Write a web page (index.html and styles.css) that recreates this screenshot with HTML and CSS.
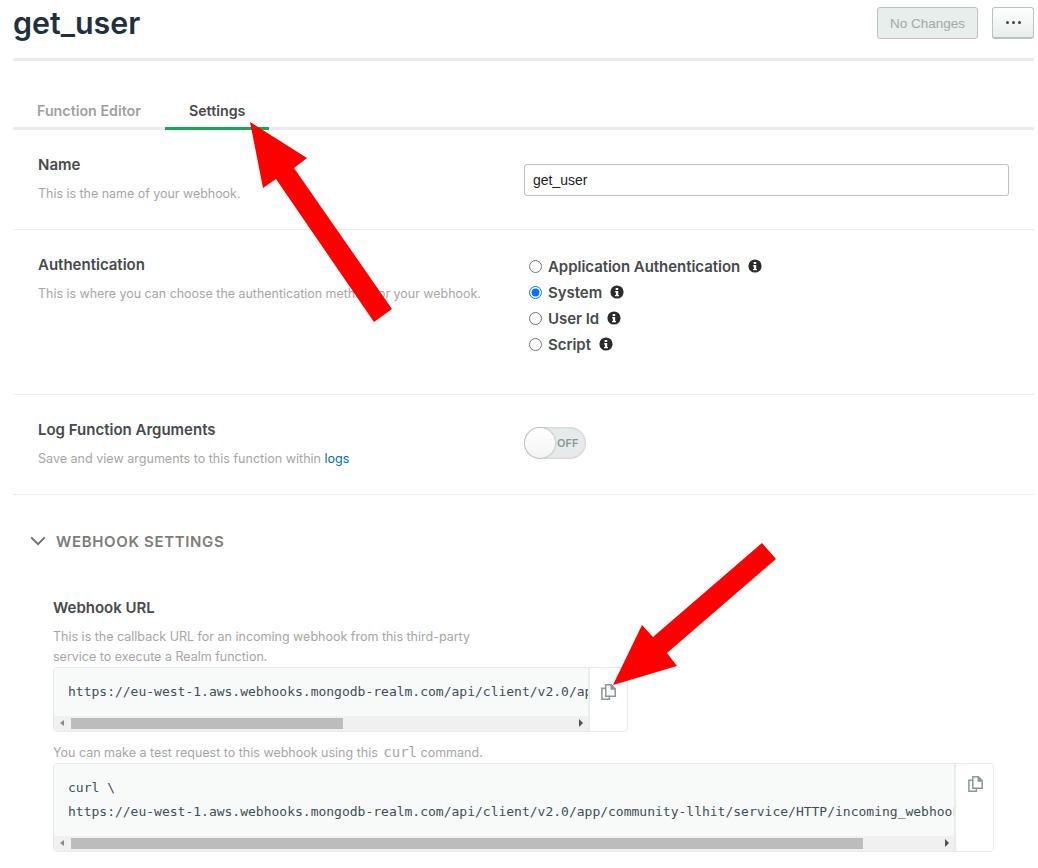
FILE: index.html
```html
<!DOCTYPE html>
<html lang="en">
<head>
<meta charset="utf-8">
<title>get_user</title>
<link rel="stylesheet" href="styles.css">
</head>
<body>
<div class="page">
  <header class="head">
    <h1 class="title">get_user</h1>
    <div class="actions">
      <button class="btn btn-disabled">No Changes</button>
      <button class="btn btn-more"><span class="dot"></span><span class="dot"></span><span class="dot"></span></button>
    </div>
  </header>
  <nav class="tabs">
    <a class="tab">Function Editor</a>
    <a class="tab tab-active">Settings</a>
  </nav>
  <section class="row row-name">
    <div class="row-left">
      <div class="label">Name</div>
      <div class="hint">This is the name of your webhook.</div>
    </div>
    <div class="row-right"><input class="text-input" type="text" value="get_user"></div>
  </section>
  <section class="row row-auth">
    <div class="row-left">
      <div class="label">Authentication</div>
      <div class="hint">This is where you can choose the authentication method for your webhook.</div>
    </div>
    <div class="row-right radios">
      <label class="radio"><input type="radio" name="auth"><span>Application Authentication</span><svg class="info" viewBox="0 0 14 14"><use href="#i-info"/></svg></label>
      <label class="radio"><input type="radio" name="auth" checked><span>System</span><svg class="info" viewBox="0 0 14 14"><use href="#i-info"/></svg></label>
      <label class="radio"><input type="radio" name="auth"><span>User Id</span><svg class="info" viewBox="0 0 14 14"><use href="#i-info"/></svg></label>
      <label class="radio"><input type="radio" name="auth"><span>Script</span><svg class="info" viewBox="0 0 14 14"><use href="#i-info"/></svg></label>
    </div>
  </section>
  <section class="row row-log">
    <div class="row-left">
      <div class="label">Log Function Arguments</div>
      <div class="hint">Save and view arguments to this function within <a class="link">logs</a></div>
    </div>
    <div class="row-right">
      <div class="toggle"><span class="knob"></span><span class="toggle-text">OFF</span></div>
    </div>
  </section>
  <section class="webhook">
    <div class="section-head">
      <svg class="chevron" viewBox="0 0 16 10"><path d="M1.2 1.400 8 8.200l6.800-6.800" fill="none" stroke="#6f7173" stroke-width="2"/></svg>
      <span>WEBHOOK SETTINGS</span>
    </div>
    <div class="field">
      <div class="label">Webhook URL</div>
      <p class="hint hint-url">This is the callback URL for an incoming webhook from this third-party<br>service to execute a Realm function.</p>
      <div class="code-box code-url">
        <div class="code-main">
          <pre class="code">https://eu-west-1.aws.webhooks.mongodb-realm.com/api/client/v2.0/app/community-llhit/service/HTTP/incoming_webhook/get_user</pre>
          <div class="scrollbar"><span class="arrow-l"></span><span class="thumb thumb-url"></span><span class="arrow-r"></span></div>
        </div>
        <div class="copy"><svg class="copy-icon" viewBox="0 0 15 16"><use href="#i-copy"/></svg></div>
      </div>
      <p class="hint hint-curl">You can make a test request to this webhook using this <code class="inline">curl</code> command.</p>
      <div class="code-box code-curl">
        <div class="code-main">
          <pre class="code">curl \
https://eu-west-1.aws.webhooks.mongodb-realm.com/api/client/v2.0/app/community-llhit/service/HTTP/incoming_webhook/get_user</pre>
          <div class="scrollbar"><span class="arrow-l"></span><span class="thumb thumb-curl"></span><span class="arrow-r"></span></div>
        </div>
        <div class="copy"><svg class="copy-icon" viewBox="0 0 15 16"><use href="#i-copy"/></svg></div>
      </div>
    </div>
  </section>
  <svg class="arrows" viewBox="0 0 1038 868">
    <polygon points="250,122 307,158 294,168 392,309 374,322 276,179 263,188" fill="#ff0000"/>
    <polygon points="613,685 677,666 667,653 776,559 762,543 653,637 642,625" fill="#ff0000"/>
  </svg>
</div>
<svg class="defs" width="0" height="0">
  <symbol id="i-info" viewBox="0 0 14 14">
    <path fill-rule="evenodd" fill="#2b2b2b" d="M7 .4a6.600 6.600 0 1 0 0 13.200A6.600 6.600 0 0 0 7 .4ZM5.700 2.900h2.500v2H5.700v-2Zm-.5 3.200h3v3.900h.8v1.300H5v-1.300h.9V7.400h-.7V6.100Z"/>
  </symbol>
  <symbol id="i-copy" viewBox="0 0 15 16">
    <path fill="none" stroke="#89979b" stroke-width="1.500" d="M4.800 12.300V.8h5.500l3.900 3.900v7.600H4.800Z"/>
    <path fill="#89979b" d="M9.500.8h1l4 4v1H9.500V.8Z"/>
    <path fill="none" stroke="#89979b" stroke-width="1.500" d="M4.800 4.300H.9v10.900h7.500v-2.900"/>
  </symbol>
</svg>
</body>
</html>
```
FILE: styles.css
```css
* { box-sizing: border-box; }
html, body { margin: 0; padding: 0; background: #fff; }
body { font-family: Inter, "Liberation Sans", sans-serif; color: #3f4244; overflow: hidden; }
.page { position: relative; width: 1038px; height: 868px; padding: 0 4px 0 13px; overflow: hidden; }
.defs { position: absolute; }

.head { display: flex; justify-content: space-between; height: 61px; border-bottom: 3px solid #ebebeb; }
.title { margin: 0; font-size: 30.400px; line-height: 46px; font-weight: 600; color: #21313c; }
.actions { display: flex; gap: 14px; padding-top: 7px; }
.btn { height: 32px; border-radius: 3px; font-family: "Liberation Sans", sans-serif; font-size: 13.500px; padding: 0; }
.btn-disabled { width: 101px; background: #e7eeec; border: 1px solid #b8c4c2; color: #9fa9a7; }
.btn-more { width: 42px; display: flex; align-items: center; justify-content: center; gap: 3px; background: linear-gradient(#fff, #e7eeec); border: 1px solid #b8c4c2; border-bottom-width: 2px; }
.dot { width: 3px; height: 3px; border-radius: 50%; background: #3f4244; }

.tabs { display: flex; height: 69px; padding-top: 33px; padding-left: 24px; border-bottom: 3px solid #ebebeb; gap: 48px; }
.tab { font-size: 14.250px; font-weight: 600; line-height: 33px; height: 36px; color: #a0a0a0; }
.tab-active { color: #464a4c; padding: 0 24px; margin-left: -24px; border-bottom: 3px solid #13aa52; }

.row { display: flex; border-bottom: 1px solid #ebebeb; padding-left: 25px; }
.row-left { width: 486px; }
.row-right { flex: 1; }
.row-name { height: 100px; padding-top: 25px; padding-right: 25px; }
.row-name .row-right { padding-top: 9px; }
.row-auth { height: 165px; padding-top: 23px; }
.row-auth .row-left { padding-top: 2px; }
.row-log { height: 100px; padding-top: 25px; }
.row-log .row-right { padding-top: 7px; }
.label { font-size: 15px; font-weight: 600; line-height: 20px; color: #464a4c; }
.hint { font-size: 12.500px; line-height: 21px; color: #a6a6a6; margin-top: 8px; }
.row .hint { font-size: 12.450px; }
.row-log .hint { font-size: 12.550px; }
.link { color: #006cbc; }

.text-input { display: block; width: 485px; height: 32px; border: 1px solid #c0c0c0; border-radius: 3px; padding: 0 8px; font-family: "Liberation Sans", sans-serif; font-size: 14px; color: #222; background: #fff; outline: none; }

.radios { display: flex; flex-direction: column; padding-left: 5px; }
.radio { display: flex; align-items: center; height: 26px; font-size: 15px; letter-spacing: -.04px; font-weight: 600; color: #464a4c; }
.radio input { margin: 0 6px 0 0; width: 13px; height: 13px; }
.info { width: 14px; height: 14px; margin-left: 8px; }

.toggle { display: flex; align-items: center; width: 62px; height: 32px; border-radius: 16px; background: #e7eaea; box-shadow: inset 0 0 3px rgba(0,0,0,.18); position: relative; padding-left: 33px; }
.knob { position: absolute; left: 1px; top: 1px; width: 30px; height: 30px; border-radius: 50%; background: linear-gradient(#fff, #f4f4f4); box-shadow: 0 0 2px rgba(0,0,0,.45); }
.toggle-text { font-size: 11px; font-weight: 600; color: #89979b; }

.webhook { padding-top: 35px; }
.section-head { display: flex; align-items: center; gap: 10px; padding-left: 17px; height: 22px; font-size: 15px; font-weight: 600; letter-spacing: .65px; color: #7c7c7c; }
.chevron { width: 16px; height: 10px; }
.field { padding-left: 40px; padding-top: 46px; }
.hint-url { margin: 9px 0 0; height: 40px; line-height: 20px; }
.code-box { display: flex; border: 1px solid #e9ecec; border-radius: 4px; overflow: hidden; }
.code-url { width: 575px; height: 65px; }
.code-curl { width: 941px; height: 89px; }
.code-main { flex: 1; min-width: 0; display: flex; flex-direction: column; border-right: 2px solid #e9ecec; background: #f8fafa; }
.code { flex: 1; margin: 0; padding: 12px 0 0 14px; overflow: hidden; font-family: "DejaVu Sans Mono", monospace; font-size: 13px; line-height: 24px; color: #3d4f58; white-space: pre; }
.scrollbar { position: relative; height: 15px; background: #f0f0f0; flex: none; }
.thumb { position: absolute; top: 2px; height: 11px; left: 17px; background: #bcbcbc; }
.thumb-url { width: 272px; }
.thumb-curl { width: 792px; }
.arrow-l { position: absolute; left: 6px; top: 4px; border: 3.500px solid transparent; border-left: 0; border-right: 4px solid #8a8a8a; }
.arrow-r { position: absolute; right: 5px; top: 3px; border: 4px solid transparent; border-right: 0; border-left: 4px solid #505050; }
.copy { flex: none; width: 37px; display: flex; justify-content: center; padding-top: 16px; }
.copy-icon { width: 15px; height: 16px; }
.code-curl .copy { padding-top: 12px; padding-left: 1px; }
.hint-curl { margin: 10px 0 0; height: 21px; line-height: 21px; }
.inline { font-family: "DejaVu Sans Mono", monospace; font-size: 14px; color: #a6a6a6; margin-left: 2px; }

.arrows { position: absolute; left: 0; top: 0; width: 1038px; height: 868px; pointer-events: none; }
```
